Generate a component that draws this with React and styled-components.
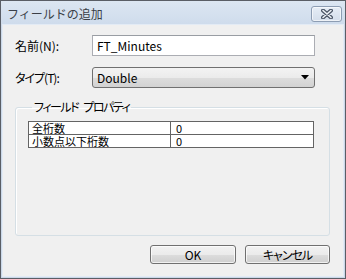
import styled, { createGlobalStyle } from "styled-components";

const GlobalStyle = createGlobalStyle`
  html, body {
    margin: 0;
    padding: 0;
    background: #ffffff;
  }
  body {
    font-family: "Noto Sans CJK JP", "Liberation Sans", sans-serif;
    font-size: 12px;
    color: #000;
  }
`;

const props = [
  { name: "全桁数", value: "0" },
  { name: "小数点以下桁数", value: "0" },
];

const App = () => {
  return (
    <>
      <GlobalStyle />
      <Window>
        <TitleBar>
          <Title>フィールドの追加</Title>
          <CloseButton>
            <svg width="12" height="10" viewBox="0 0 12 10">
              <path d="M2 1.5 L10 8.5 M10 1.5 L2 8.5" stroke="#4a5566" strokeWidth="4" strokeLinecap="round" />
              <path d="M2 1.5 L10 8.5 M10 1.5 L2 8.5" stroke="#eef2f7" strokeWidth="1.6" strokeLinecap="round" />
            </svg>
          </CloseButton>
        </TitleBar>
        <Client>
          <FormRow>
            <Label>名前(N):</Label>
            <TextBox>FT_Minutes</TextBox>
          </FormRow>
          <FormRow>
            <Label $tight>タイプ(T):</Label>
            <Combo>
              <span>Double</span>
              <svg width="8" height="5" viewBox="0 0 8 5">
                <path d="M0 0 H8 L4 4.5 Z" fill="#000" />
              </svg>
            </Combo>
          </FormRow>
          <Group>
            <Legend>フィールド プロパティ</Legend>
            <PropTable>
              <tbody>
                {props.map((p) => (
                  <tr key={p.name}>
                    <NameCell>{p.name}</NameCell>
                    <ValueCell>{p.value}</ValueCell>
                  </tr>
                ))}
              </tbody>
            </PropTable>
          </Group>
          <ButtonRow>
            <Button $width={86}>OK</Button>
            <Button $width={85} $tight>キャンセル</Button>
          </ButtonRow>
        </Client>
      </Window>
    </>
  );
};

const Window = styled.div`
  width: 346px;
  height: 279px;
  box-sizing: border-box;
  border: 1px solid #5a5e66;
  background: linear-gradient(#dbe5f1, #cbd8e8 30px, #cbd8e8);
  padding: 0 1px 1px 1px;
  display: flex;
  flex-direction: column;
`;

const TitleBar = styled.div`
  height: 23px;
  display: flex;
  align-items: center;
  justify-content: space-between;
  padding-left: 5px;
  padding-right: 2px;
  background: linear-gradient(#dce6f2, #cfdcec);
`;

const Title = styled.div`
  font-size: 12px;
  line-height: 14px;
  color: #3a3f47;
  margin-top: 3px;
`;

const CloseButton = styled.div`
  width: 29px;
  height: 14px;
  margin-top: 3px;
  border: 1px solid #8d9db3;
  border-radius: 3px;
  background: linear-gradient(#e6edf6, #d4deeb);
  box-shadow: inset 0 0 0 1px rgba(255, 255, 255, 0.6);
  display: flex;
  align-items: center;
  justify-content: center;
`;

const Client = styled.div`
  flex: 1;
  background: #f0f0f0;
  border: 1px solid #e3ebf5;
  padding: 10px 13px 12px 12px;
  display: flex;
  flex-direction: column;
`;

const FormRow = styled.div`
  display: flex;
  align-items: center;
  height: 21px;
  margin-bottom: 11px;
`;

const Label = styled.div`
  width: 77px;
  font-feature-settings: "palt";
  letter-spacing: ${(p) => (p.$tight ? "-1px" : "0")};
  line-height: 14px;
`;

const TextBox = styled.div`
  width: 223px;
  height: 21px;
  box-sizing: border-box;
  background: #fff;
  border: 1px solid #abadb3;
  border-top-color: #999da3;
  padding: 0 4px;
  line-height: 19px;
  font-size: 12px;
`;

const Combo = styled.div`
  width: 223px;
  height: 21px;
  box-sizing: border-box;
  border: 1px solid #707070;
  border-radius: 3px;
  background: linear-gradient(#f3f3f3, #ebebeb 50%, #dddddd 51%, #d2d2d2);
  padding: 0 5px 0 4px;
  display: flex;
  align-items: center;
  justify-content: space-between;
  line-height: 19px;
`;

const Group = styled.fieldset`
  flex: 1;
  margin: 1px 0 0 0;
  padding: 0 12px;
  border: 1px solid #d5dfe5;
  border-radius: 3px;
  box-shadow: inset 1px 1px 0 #fff;
  min-width: 0;
`;

const Legend = styled.legend`
  margin-left: 4px;
  padding: 0 2px;
  line-height: 14px;
  font-feature-settings: "palt";
  letter-spacing: -1.5px;
  word-spacing: 4px;
`;

const PropTable = styled.table`
  width: 286px;
  margin-top: 7px;
  border-collapse: collapse;
  background: #fff;
  font-size: 11px;
  td {
    border: 1px solid #646464;
    height: 12px;
    line-height: 12px;
    padding: 0 3px;
  }
`;

const NameCell = styled.td`
  width: 135px;
`;

const ValueCell = styled.td`
  padding-left: 5px !important;
`;

const ButtonRow = styled.div`
  display: flex;
  justify-content: flex-end;
  gap: 9px;
  margin-top: 9px;
`;

const Button = styled.div`
  width: ${(p) => p.$width}px;
  height: 19px;
  box-sizing: border-box;
  border: 1px solid #707070;
  border-radius: 3px;
  background: linear-gradient(#f2f2f2, #ebebeb 50%, #dddddd 51%, #cfcfcf);
  box-shadow: inset 0 0 0 1px rgba(255, 255, 255, 0.7);
  display: flex;
  align-items: center;
  justify-content: center;
  line-height: 14px;
  font-feature-settings: "palt";
  letter-spacing: ${(p) => (p.$tight ? "-1px" : "0")};
`;

export default App;
